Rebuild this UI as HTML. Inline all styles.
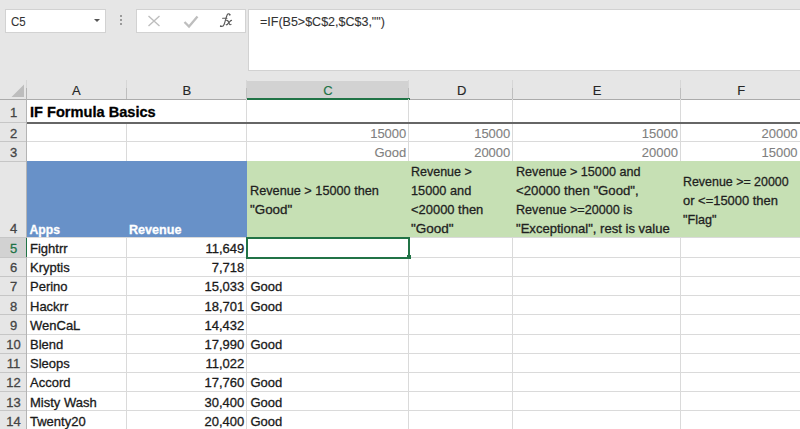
<!DOCTYPE html>
<html><head><meta charset="utf-8">
<style>
html,body{margin:0;padding:0;}
body{width:800px;height:429px;overflow:hidden;position:relative;background:#E6E6E6;font-family:"Liberation Sans",sans-serif;}
.a{position:absolute;}
.t{position:absolute;white-space:pre;line-height:1;font-family:"Liberation Sans",sans-serif;-webkit-text-stroke-width:0.3px;}
.hl{position:absolute;height:1px;background:#DADADA;}
.vl{position:absolute;width:1px;background:#DADADA;}
</style></head><body>
<!-- toolbar -->
<div class="a" style="left:5px;top:9px;width:99px;height:22px;background:#fff;border:1px solid #D2D2D2;"></div>
<div class="t" style="left:11px;top:15.6px;font-size:12.5px;color:#333;-webkit-text-stroke-width:0.1px;transform:scaleX(0.92);transform-origin:0 0;">C5</div>
<div class="a" style="left:93.5px;top:19px;width:0;height:0;border-left:3px solid transparent;border-right:3px solid transparent;border-top:3.5px solid #555;"></div>
<div class="a" style="left:120px;top:15px;width:2px;height:2px;background:#9a9a9a;"></div>
<div class="a" style="left:120px;top:19px;width:2px;height:2px;background:#9a9a9a;"></div>
<div class="a" style="left:120px;top:23px;width:2px;height:2px;background:#9a9a9a;"></div>
<div class="a" style="left:136px;top:9px;width:108px;height:22px;background:#fff;border:1px solid #D2D2D2;"></div>
<svg class="a" style="left:146px;top:14px" width="16" height="14" viewBox="0 0 16 14"><path d="M2.5 2 L13.5 12 M13.5 2 L2.5 12" stroke="#BEBEBE" stroke-width="1.4" fill="none"/></svg>
<svg class="a" style="left:182px;top:14px" width="18" height="15" viewBox="0 0 18 15"><path d="M2.5 8 L7 12.5 L15.5 2.5" stroke="#BEBEBE" stroke-width="2.3" fill="none"/></svg>
<svg class="a" style="left:215px;top:10px" width="22" height="22" viewBox="0 0 22 22"><g fill="none" stroke="#5a5a5a" stroke-linecap="round"><path d="M14.9 4.9 C14.6 3.5 12.9 3.2 12.1 4.9 C11.2 7 10.2 11.6 9.2 14.3 C8.6 15.9 7.6 16.9 5.8 16.4" stroke-width="1.15"/><path d="M7.6 8.2 L11.9 8.2" stroke-width="1.1"/><path d="M11.7 10.4 C12.9 10.2 13.3 11.2 13.8 12.4 L14.3 13.8 C14.7 14.8 15.3 15 16 14.4" stroke-width="1.2"/><path d="M16.5 10.4 C15.6 10.6 13.5 13 12.6 14.2 C12.2 14.8 11.6 15 11.2 14.6" stroke-width="1.2"/></g><circle cx="14.6" cy="4.6" r="0.9" fill="#5a5a5a"/><circle cx="5.8" cy="16.2" r="0.9" fill="#5a5a5a"/></svg>
<div class="a" style="left:248px;top:9px;width:560px;height:60px;background:#fff;border:1px solid #D2D2D2;"></div>
<div class="t" style="left:260px;top:15.5px;font-size:12.5px;color:#333;-webkit-text-stroke-width:0.1px;">=IF(B5&gt;$C$2,$C$3,"")</div>

<!-- sheet area -->
<div class="a" style="left:26px;top:99px;width:774px;height:330px;background:#fff;"></div>
<!-- selected column header C -->
<div class="a" style="left:247px;top:81px;width:161px;height:18px;background:#D2D2D2;"></div>
<!-- selected row header 5 -->
<div class="a" style="left:0px;top:238px;width:26px;height:19px;background:#D2D2D2;"></div>

<!-- header separators -->
<div class="a" style="left:0;top:99px;width:800px;height:1px;background:#ABABAB;"></div>
<div class="a" style="left:26px;top:80px;width:1px;height:349px;background:linear-gradient(#D6D6D6 0,#D6D6D6 8px,#B4B4B4 8px);"></div>
<div class="a" style="left:126px;top:80px;width:1px;height:19px;background:linear-gradient(#D6D6D6 0,#D6D6D6 8px,#BEBEBE 8px);"></div>
<div class="a" style="left:246px;top:80px;width:1px;height:19px;background:linear-gradient(#D6D6D6 0,#D6D6D6 8px,#BEBEBE 8px);"></div>
<div class="a" style="left:408px;top:80px;width:1px;height:19px;background:linear-gradient(#D6D6D6 0,#D6D6D6 8px,#BEBEBE 8px);"></div>
<div class="a" style="left:512px;top:80px;width:1px;height:19px;background:linear-gradient(#D6D6D6 0,#D6D6D6 8px,#BEBEBE 8px);"></div>
<div class="a" style="left:680px;top:80px;width:1px;height:19px;background:linear-gradient(#D6D6D6 0,#D6D6D6 8px,#BEBEBE 8px);"></div>
<div class="a" style="left:247px;top:98px;width:163px;height:2px;background:#217346;"></div>
<div class="a" style="left:26px;top:238px;width:1px;height:19px;background:#217346;"></div>
<!-- corner triangle -->
<svg class="a" style="left:0;top:80px" width="26" height="19"><path d="M24 4.5 L24 17 L11.5 17 Z" fill="#BDBDBD"/></svg>
<!-- row header separators -->
<div class="a" style="left:0;top:122px;width:26px;height:1px;background:#C6C6C6;"></div>
<div class="a" style="left:0;top:141px;width:26px;height:1px;background:#C6C6C6;"></div>
<div class="a" style="left:0;top:161px;width:26px;height:1px;background:#C6C6C6;"></div>
<div class="a" style="left:0;top:237px;width:26px;height:1px;background:#C6C6C6;"></div>
<div class="a" style="left:0;top:257px;width:26px;height:1px;background:#C6C6C6;"></div>
<div class="a" style="left:0;top:276px;width:26px;height:1px;background:#C6C6C6;"></div>
<div class="a" style="left:0;top:295px;width:26px;height:1px;background:#C6C6C6;"></div>
<div class="a" style="left:0;top:314px;width:26px;height:1px;background:#C6C6C6;"></div>
<div class="a" style="left:0;top:334px;width:26px;height:1px;background:#C6C6C6;"></div>
<div class="a" style="left:0;top:353px;width:26px;height:1px;background:#C6C6C6;"></div>
<div class="a" style="left:0;top:372px;width:26px;height:1px;background:#C6C6C6;"></div>
<div class="a" style="left:0;top:391px;width:26px;height:1px;background:#C6C6C6;"></div>
<div class="a" style="left:0;top:410px;width:26px;height:1px;background:#C6C6C6;"></div>

<!-- gridlines horizontal -->
<div class="hl" style="left:27px;top:141px;width:773px;"></div>
<div class="hl" style="left:27px;top:161px;width:773px;"></div>
<div class="hl" style="left:27px;top:237px;width:773px;"></div>
<div class="hl" style="left:27px;top:257px;width:773px;"></div>
<div class="hl" style="left:27px;top:276px;width:773px;"></div>
<div class="hl" style="left:27px;top:295px;width:773px;"></div>
<div class="hl" style="left:27px;top:314px;width:773px;"></div>
<div class="hl" style="left:27px;top:334px;width:773px;"></div>
<div class="hl" style="left:27px;top:353px;width:773px;"></div>
<div class="hl" style="left:27px;top:372px;width:773px;"></div>
<div class="hl" style="left:27px;top:391px;width:773px;"></div>
<div class="hl" style="left:27px;top:410px;width:773px;"></div>
<!-- gridlines vertical (rows 2..14) -->
<div class="vl" style="left:126px;top:123px;height:306px;"></div>
<div class="vl" style="left:246px;top:99px;height:330px;"></div>
<div class="vl" style="left:408px;top:99px;height:330px;"></div>
<div class="vl" style="left:512px;top:99px;height:330px;"></div>
<div class="vl" style="left:680px;top:99px;height:330px;"></div>

<!-- fills -->
<div class="a" style="left:27px;top:161px;width:220px;height:76px;background:#6891C8;"></div>
<div class="a" style="left:247px;top:161px;width:553px;height:76px;background:#C6E0B4;"></div>

<!-- thick border row 1 -->
<div class="a" style="left:27px;top:122px;width:773px;height:2px;background:#666666;"></div>

<!-- selection box C5 -->
<div class="a" style="left:246px;top:237px;width:164px;height:22px;border:2px solid #217346;box-sizing:border-box;"></div>
<div class="a" style="left:407px;top:255px;width:4px;height:4px;background:#217346;"></div>

<div class="t" style="left:-86.5px;width:200px;text-align:center;top:106.30px;font-size:13px;color:#444;transform-origin:50% 0;">1</div>
<div class="t" style="left:-86.5px;width:200px;text-align:center;top:126.60px;font-size:13px;color:#444;transform-origin:50% 0;">2</div>
<div class="t" style="left:-86.5px;width:200px;text-align:center;top:145.60px;font-size:13px;color:#444;transform-origin:50% 0;">3</div>
<div class="t" style="left:-86.5px;width:200px;text-align:center;top:222.40px;font-size:13px;color:#444;transform-origin:50% 0;">4</div>
<div class="t" style="left:-86.5px;width:200px;text-align:center;top:242.00px;font-size:13px;color:#217346;transform-origin:50% 0;">5</div>
<div class="t" style="left:-86.5px;width:200px;text-align:center;top:261.10px;font-size:13px;color:#444;transform-origin:50% 0;">6</div>
<div class="t" style="left:-86.5px;width:200px;text-align:center;top:280.30px;font-size:13px;color:#444;transform-origin:50% 0;">7</div>
<div class="t" style="left:-86.5px;width:200px;text-align:center;top:299.50px;font-size:13px;color:#444;transform-origin:50% 0;">8</div>
<div class="t" style="left:-86.5px;width:200px;text-align:center;top:318.80px;font-size:13px;color:#444;transform-origin:50% 0;">9</div>
<div class="t" style="left:-86.5px;width:200px;text-align:center;top:338.10px;font-size:13px;color:#444;transform-origin:50% 0;">10</div>
<div class="t" style="left:-86.5px;width:200px;text-align:center;top:357.30px;font-size:13px;color:#444;transform-origin:50% 0;">11</div>
<div class="t" style="left:-86.5px;width:200px;text-align:center;top:376.40px;font-size:13px;color:#444;transform-origin:50% 0;">12</div>
<div class="t" style="left:-86.5px;width:200px;text-align:center;top:395.60px;font-size:13px;color:#444;transform-origin:50% 0;">13</div>
<div class="t" style="left:-86.5px;width:200px;text-align:center;top:414.80px;font-size:13px;color:#444;transform-origin:50% 0;">14</div>
<div class="t" style="left:-23.549999999999997px;width:200px;text-align:center;top:83.60px;font-size:13px;color:#262626;transform-origin:50% 0;-webkit-text-stroke-width:0.15px;">A</div>
<div class="t" style="left:86.80000000000001px;width:200px;text-align:center;top:83.60px;font-size:13px;color:#262626;transform-origin:50% 0;-webkit-text-stroke-width:0.15px;">B</div>
<div class="t" style="left:228px;width:200px;text-align:center;top:83.60px;font-size:13px;color:#217346;transform-origin:50% 0;-webkit-text-stroke-width:0.15px;">C</div>
<div class="t" style="left:361.6px;width:200px;text-align:center;top:83.60px;font-size:13px;color:#262626;transform-origin:50% 0;-webkit-text-stroke-width:0.15px;">D</div>
<div class="t" style="left:497.20000000000005px;width:200px;text-align:center;top:83.60px;font-size:13px;color:#262626;transform-origin:50% 0;-webkit-text-stroke-width:0.15px;">E</div>
<div class="t" style="left:641.2px;width:200px;text-align:center;top:83.60px;font-size:13px;color:#262626;transform-origin:50% 0;-webkit-text-stroke-width:0.15px;">F</div>
<div class="t" style="left:30px;top:105.45px;font-size:14.6px;color:#000;font-weight:bold;transform-origin:0 0;">IF Formula Basics</div>
<div class="t" style="right:393.7px;top:126.60px;font-size:13px;color:#7F7F7F;transform-origin:100% 0;-webkit-text-stroke-width:0.12px;">15000</div>
<div class="t" style="right:289.7px;top:126.60px;font-size:13px;color:#7F7F7F;transform-origin:100% 0;-webkit-text-stroke-width:0.12px;">15000</div>
<div class="t" style="right:122.0px;top:126.60px;font-size:13px;color:#7F7F7F;transform-origin:100% 0;-webkit-text-stroke-width:0.12px;">15000</div>
<div class="t" style="right:2.3999999999999773px;top:126.60px;font-size:13px;color:#7F7F7F;transform-origin:100% 0;-webkit-text-stroke-width:0.12px;">20000</div>
<div class="t" style="right:393.7px;top:145.50px;font-size:13px;color:#7F7F7F;transform-origin:100% 0;-webkit-text-stroke-width:0.12px;">Good</div>
<div class="t" style="right:289.7px;top:145.50px;font-size:13px;color:#7F7F7F;transform-origin:100% 0;-webkit-text-stroke-width:0.12px;">20000</div>
<div class="t" style="right:122.0px;top:145.50px;font-size:13px;color:#7F7F7F;transform-origin:100% 0;-webkit-text-stroke-width:0.12px;">20000</div>
<div class="t" style="right:2.3999999999999773px;top:145.50px;font-size:13px;color:#7F7F7F;transform-origin:100% 0;-webkit-text-stroke-width:0.12px;">15000</div>
<div class="t" style="left:29.5px;top:223.88px;font-size:12.2px;color:#fff;font-weight:bold;transform-origin:0 0;">Apps</div>
<div class="t" style="left:129px;top:223.54px;font-size:12.6px;color:#fff;font-weight:bold;transform-origin:0 0;">Revenue</div>
<div class="t" style="left:249.6px;top:184.30px;font-size:13px;color:#1f1f1f;transform:scaleX(0.977);transform-origin:0 0;">Revenue &gt; 15000 then</div>
<div class="t" style="left:249.6px;top:203.30px;font-size:13px;color:#1f1f1f;transform:scaleX(1.03);transform-origin:0 0;">"Good"</div>
<div class="t" style="left:411.3px;top:164.90px;font-size:13px;color:#1f1f1f;transform:scaleX(0.96);transform-origin:0 0;">Revenue &gt;</div>
<div class="t" style="left:411.3px;top:184.00px;font-size:13px;color:#1f1f1f;transform:scaleX(0.98);transform-origin:0 0;">15000 and</div>
<div class="t" style="left:411.3px;top:203.10px;font-size:13px;color:#1f1f1f;transform:scaleX(0.995);transform-origin:0 0;">&lt;20000 then</div>
<div class="t" style="left:411.3px;top:222.10px;font-size:13px;color:#1f1f1f;transform:scaleX(1.04);transform-origin:0 0;">"Good"</div>
<div class="t" style="left:515.6px;top:164.90px;font-size:13px;color:#1f1f1f;transform:scaleX(0.97);transform-origin:0 0;">Revenue &gt; 15000 and</div>
<div class="t" style="left:515.6px;top:184.00px;font-size:13px;color:#1f1f1f;transform:scaleX(1.015);transform-origin:0 0;">&lt;20000 then "Good",</div>
<div class="t" style="left:515.6px;top:203.10px;font-size:13px;color:#1f1f1f;transform:scaleX(0.97);transform-origin:0 0;">Revenue &gt;=20000 is</div>
<div class="t" style="left:515.6px;top:222.10px;font-size:13px;color:#1f1f1f;transform:scaleX(1.005);transform-origin:0 0;">"Exceptional", rest is value</div>
<div class="t" style="left:683.2px;top:174.60px;font-size:13px;color:#1f1f1f;transform:scaleX(0.955);transform-origin:0 0;">Revenue &gt;= 20000</div>
<div class="t" style="left:683.2px;top:193.70px;font-size:13px;color:#1f1f1f;transform:scaleX(0.995);transform-origin:0 0;">or &lt;=15000 then</div>
<div class="t" style="left:683.2px;top:212.80px;font-size:13px;color:#1f1f1f;transform:scaleX(0.97);transform-origin:0 0;">"Flag"</div>
<div class="t" style="left:30px;top:242.00px;font-size:13px;color:#1a1a1a;transform-origin:0 0;">Fightrr</div>
<div class="t" style="right:555.7px;top:242.00px;font-size:13px;color:#1a1a1a;transform-origin:100% 0;">11,649</div>
<div class="t" style="left:30px;top:261.10px;font-size:13px;color:#1a1a1a;transform-origin:0 0;">Kryptis</div>
<div class="t" style="right:555.7px;top:261.10px;font-size:13px;color:#1a1a1a;transform-origin:100% 0;">7,718</div>
<div class="t" style="left:30px;top:280.30px;font-size:13px;color:#1a1a1a;transform-origin:0 0;">Perino</div>
<div class="t" style="right:555.7px;top:280.30px;font-size:13px;color:#1a1a1a;transform-origin:100% 0;">15,033</div>
<div class="t" style="left:250.4px;top:280.30px;font-size:13px;color:#1a1a1a;transform-origin:0 0;">Good</div>
<div class="t" style="left:30px;top:299.50px;font-size:13px;color:#1a1a1a;transform-origin:0 0;">Hackrr</div>
<div class="t" style="right:555.7px;top:299.50px;font-size:13px;color:#1a1a1a;transform-origin:100% 0;">18,701</div>
<div class="t" style="left:250.4px;top:299.50px;font-size:13px;color:#1a1a1a;transform-origin:0 0;">Good</div>
<div class="t" style="left:30px;top:318.80px;font-size:13px;color:#1a1a1a;transform-origin:0 0;">WenCaL</div>
<div class="t" style="right:555.7px;top:318.80px;font-size:13px;color:#1a1a1a;transform-origin:100% 0;">14,432</div>
<div class="t" style="left:30px;top:338.10px;font-size:13px;color:#1a1a1a;transform-origin:0 0;">Blend</div>
<div class="t" style="right:555.7px;top:338.10px;font-size:13px;color:#1a1a1a;transform-origin:100% 0;">17,990</div>
<div class="t" style="left:250.4px;top:338.10px;font-size:13px;color:#1a1a1a;transform-origin:0 0;">Good</div>
<div class="t" style="left:30px;top:357.30px;font-size:13px;color:#1a1a1a;transform-origin:0 0;">Sleops</div>
<div class="t" style="right:555.7px;top:357.30px;font-size:13px;color:#1a1a1a;transform-origin:100% 0;">11,022</div>
<div class="t" style="left:30px;top:376.40px;font-size:13px;color:#1a1a1a;transform-origin:0 0;">Accord</div>
<div class="t" style="right:555.7px;top:376.40px;font-size:13px;color:#1a1a1a;transform-origin:100% 0;">17,760</div>
<div class="t" style="left:250.4px;top:376.40px;font-size:13px;color:#1a1a1a;transform-origin:0 0;">Good</div>
<div class="t" style="left:30px;top:395.60px;font-size:13px;color:#1a1a1a;transform-origin:0 0;">Misty Wash</div>
<div class="t" style="right:555.7px;top:395.60px;font-size:13px;color:#1a1a1a;transform-origin:100% 0;">30,400</div>
<div class="t" style="left:250.4px;top:395.60px;font-size:13px;color:#1a1a1a;transform-origin:0 0;">Good</div>
<div class="t" style="left:30px;top:414.80px;font-size:13px;color:#1a1a1a;transform-origin:0 0;">Twenty20</div>
<div class="t" style="right:555.7px;top:414.80px;font-size:13px;color:#1a1a1a;transform-origin:100% 0;">20,400</div>
<div class="t" style="left:250.4px;top:414.80px;font-size:13px;color:#1a1a1a;transform-origin:0 0;">Good</div>

</body></html>
